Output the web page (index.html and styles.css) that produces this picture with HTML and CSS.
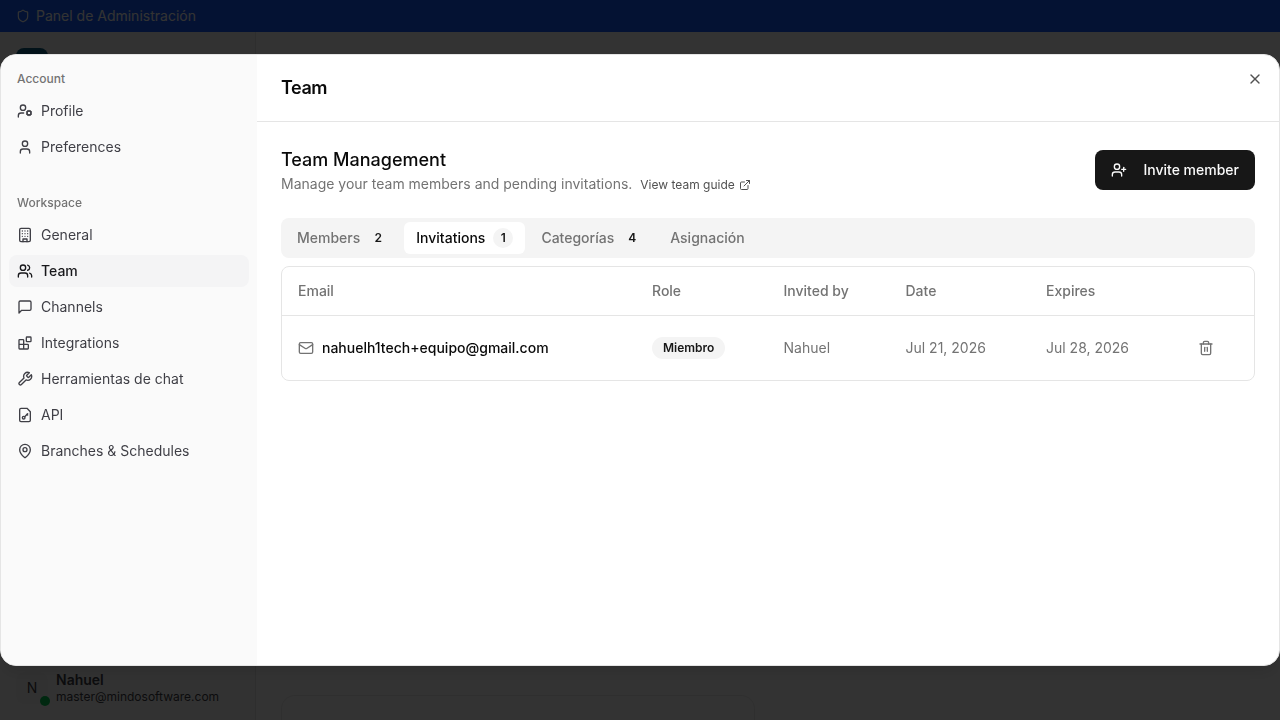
FILE: index.html
```html
<!DOCTYPE html>
<html lang="en">

<head>
    <meta charset="UTF-8">
    <meta name="viewport" content="width=device-width, initial-scale=1.0">
    <title>Team</title>
    <link rel="stylesheet" href="styles.css">
</head>

<body>
    <!-- App behind the dialog -->
    <div class="app">
        <div class="admin-bar">
            <svg class="icon icon-shield" viewBox="0 0 24 24"><path d="M20 13c0 5-3.5 7.5-7.66 8.95a1 1 0 0 1-.67-.01C7.5 20.5 4 18 4 13V6a1 1 0 0 1 1-1c2 0 4.5-1.2 6.24-2.72a1.17 1.17 0 0 1 1.52 0C14.51 3.81 17 5 19 5a1 1 0 0 1 1 1z"/></svg>
            <span>Panel de Administración</span>
        </div>
        <div class="app-body">
            <div class="app-sidebar">
                <div class="app-logo"></div>
                <div class="app-user">
                    <div class="avatar">N<span class="status-dot"></span></div>
                    <div class="user-info">
                        <div class="user-name">Nahuel</div>
                        <div class="user-email">master@mindosoftware.com</div>
                    </div>
                </div>
            </div>
            <div class="app-main">
                <div class="app-card"></div>
            </div>
        </div>
    </div>

    <div class="overlay">
        <div class="dialog">
            <nav class="settings-nav">
                <div class="nav-group">
                    <div class="nav-label">Account</div>
                    <a class="nav-item">
                        <svg class="icon" viewBox="0 0 24 24"><path d="M10 15H6a4 4 0 0 0-4 4v2"/><path d="m14.305 16.53.923-.382"/><path d="m15.228 13.852-.923-.383"/><path d="m16.852 12.228-.383-.923"/><path d="m16.852 17.772-.383.924"/><path d="m19.148 12.228.383-.923"/><path d="m19.53 18.696-.382-.924"/><path d="m20.772 13.852.924-.383"/><path d="m20.772 16.148.924.383"/><circle cx="18" cy="15" r="3"/><circle cx="9" cy="7" r="4"/></svg>
                        Profile
                    </a>
                    <a class="nav-item">
                        <svg class="icon" viewBox="0 0 24 24"><path d="M19 21v-2a4 4 0 0 0-4-4H9a4 4 0 0 0-4 4v2"/><circle cx="12" cy="7" r="4"/></svg>
                        Preferences
                    </a>
                </div>
                <div class="nav-group">
                    <div class="nav-label">Workspace</div>
                    <a class="nav-item">
                        <svg class="icon" viewBox="0 0 24 24"><rect width="16" height="20" x="4" y="2" rx="2"/><path d="M9 22v-4h6v4"/><path d="M8 6h.01M12 6h.01M16 6h.01M8 10h.01M12 10h.01M16 10h.01M8 14h.01M12 14h.01M16 14h.01"/></svg>
                        General
                    </a>
                    <a class="nav-item active">
                        <svg class="icon" viewBox="0 0 24 24"><path d="M16 21v-2a4 4 0 0 0-4-4H6a4 4 0 0 0-4 4v2"/><circle cx="9" cy="7" r="4"/><path d="M22 21v-2a4 4 0 0 0-3-3.87"/><path d="M16 3.13a4 4 0 0 1 0 7.75"/></svg>
                        Team
                    </a>
                    <a class="nav-item">
                        <svg class="icon" viewBox="0 0 24 24"><path d="M21 15a2 2 0 0 1-2 2H7l-4 4V5a2 2 0 0 1 2-2h14a2 2 0 0 1 2 2z"/></svg>
                        Channels
                    </a>
                    <a class="nav-item">
                        <svg class="icon" viewBox="0 0 24 24"><rect width="7" height="7" x="14" y="3" rx="1"/><path d="M10 21V8a1 1 0 0 0-1-1H4a1 1 0 0 0-1 1v12a1 1 0 0 0 1 1h12a1 1 0 0 0 1-1v-5a1 1 0 0 0-1-1H3"/></svg>
                        Integrations
                    </a>
                    <a class="nav-item">
                        <svg class="icon" viewBox="0 0 24 24"><path d="M14.7 6.3a1 1 0 0 0 0 1.4l1.6 1.6a1 1 0 0 0 1.4 0l3.77-3.77a6 6 0 0 1-7.94 7.94l-6.91 6.91a2.12 2.12 0 0 1-3-3l6.91-6.91a6 6 0 0 1 7.94-7.94l-3.76 3.76z"/></svg>
                        Herramientas de chat
                    </a>
                    <a class="nav-item">
                        <svg class="icon" viewBox="0 0 24 24"><path d="M15 2H6a2 2 0 0 0-2 2v16a2 2 0 0 0 2 2h12a2 2 0 0 0 2-2V7Z"/><circle cx="10" cy="16" r="2"/><path d="m16 10-4.5 4.5"/><path d="m15 11 1 1"/></svg>
                        API
                    </a>
                    <a class="nav-item">
                        <svg class="icon" viewBox="0 0 24 24"><path d="M20 10c0 4.993-5.539 10.193-7.399 11.799a1 1 0 0 1-1.202 0C9.539 20.193 4 14.993 4 10a8 8 0 0 1 16 0"/><circle cx="12" cy="10" r="3"/></svg>
                        Branches &amp; Schedules
                    </a>
                </div>
            </nav>

            <div class="panel">
                <header class="panel-header">
                    <h2>Team</h2>
                    <button class="close-btn" aria-label="Close">
                        <svg class="icon" viewBox="0 0 24 24"><path d="M18 6 6 18"/><path d="m6 6 12 12"/></svg>
                    </button>
                </header>

                <div class="panel-content">
                    <div class="section-head">
                        <div>
                            <h3>Team Management</h3>
                            <div class="section-desc">
                                <span>Manage your team members and pending invitations.</span>
                                <a class="guide-link">View team guide
                                    <svg class="icon" viewBox="0 0 24 24"><path d="M15 3h6v6"/><path d="M10 14 21 3"/><path d="M18 13v6a2 2 0 0 1-2 2H5a2 2 0 0 1-2-2V8a2 2 0 0 1 2-2h6"/></svg>
                                </a>
                            </div>
                        </div>
                        <button class="invite-btn">
                            <svg class="icon" viewBox="0 0 24 24"><path d="M16 21v-2a4 4 0 0 0-4-4H6a4 4 0 0 0-4 4v2"/><circle cx="9" cy="7" r="4"/><path d="M19 8v6"/><path d="M22 11h-6"/></svg>
                            Invite member
                        </button>
                    </div>

                    <div class="tabs">
                        <div class="tab">Members <span class="count">2</span></div>
                        <div class="tab active">Invitations <span class="count">1</span></div>
                        <div class="tab">Categorías <span class="count">4</span></div>
                        <div class="tab">Asignación</div>
                    </div>

                    <div class="table-wrap">
                        <table>
                            <thead>
                                <tr>
                                    <th class="col-email">Email</th>
                                    <th class="col-role">Role</th>
                                    <th class="col-by">Invited by</th>
                                    <th class="col-date">Date</th>
                                    <th class="col-expires">Expires</th>
                                    <th></th>
                                </tr>
                            </thead>
                            <tbody>
                                <tr>
                                    <td>
                                        <div class="email-cell">
                                            <svg class="icon" viewBox="0 0 24 24"><rect width="20" height="16" x="2" y="4" rx="2"/><path d="m22 7-8.97 5.7a1.94 1.94 0 0 1-2.06 0L2 7"/></svg>
                                            <span>nahuelh1tech+equipo@gmail.com</span>
                                        </div>
                                    </td>
                                    <td><span class="role-badge">Miembro</span></td>
                                    <td>Nahuel</td>
                                    <td>Jul 21, 2026</td>
                                    <td>Jul 28, 2026</td>
                                    <td class="actions">
                                        <svg class="icon" viewBox="0 0 24 24"><path d="M3 6h18"/><path d="M19 6v14a2 2 0 0 1-2 2H7a2 2 0 0 1-2-2V6"/><path d="M8 6V4a2 2 0 0 1 2-2h4a2 2 0 0 1 2 2v2"/><path d="M10 11v6"/><path d="M14 11v6"/></svg>
                                    </td>
                                </tr>
                            </tbody>
                        </table>
                    </div>
                </div>
            </div>
        </div>
    </div>
</body>

</html>
```
FILE: styles.css
```css
* {
    box-sizing: border-box;
}

body {
    margin: 0;
    height: 100vh;
    overflow: hidden;
    font-family: Inter, sans-serif;
    font-size: 14px;
    line-height: 20px;
    color: #0a0a0a;
    background-color: #fff;
    -webkit-font-smoothing: antialiased;
}

h2,
h3 {
    margin: 0;
    font-size: 18px;
    line-height: 28px;
}

h2 {
    font-weight: 600;
    letter-spacing: -0.025em;
}

h3 {
    font-weight: 500;
}

button {
    font: inherit;
    border: none;
    background: none;
    padding: 0;
    cursor: pointer;
}

.icon {
    width: 16px;
    height: 16px;
    flex-shrink: 0;
    fill: none;
    stroke: currentColor;
    stroke-width: 2;
    stroke-linecap: round;
    stroke-linejoin: round;
}

/* App behind the dialog */
.app {
    height: 100vh;
    display: flex;
    flex-direction: column;
}

.admin-bar {
    height: 32px;
    flex-shrink: 0;
    display: flex;
    align-items: center;
    gap: 6px;
    padding-left: 16px;
    color: #fff;
    background-color: #155dfc;
}

.icon-shield {
    width: 14px;
    height: 14px;
}

.app-body {
    flex: 1;
    display: flex;
    min-height: 0;
}

.app-sidebar {
    width: 256px;
    padding: 16px 16px 15px;
    display: flex;
    flex-direction: column;
    justify-content: space-between;
    color: #3f3f46;
    background-color: #fafafa;
    border-right: 1px solid #e5e5e5;
}

.app-logo {
    width: 32px;
    height: 32px;
    border-radius: 8px;
    background-color: #0b5a7d;
}

.app-user {
    display: flex;
    align-items: center;
    gap: 8px;
}

.avatar {
    position: relative;
    width: 32px;
    height: 32px;
    display: flex;
    align-items: center;
    justify-content: center;
    border-radius: 8px;
    background-color: #f5f5f5;
}

.status-dot {
    position: absolute;
    right: -2px;
    bottom: -2px;
    width: 10px;
    height: 10px;
    border-radius: 50%;
    background-color: #00c950;
}

.user-name {
    font-weight: 600;
    line-height: 18px;
}

.user-email {
    font-size: 12px;
    line-height: 16px;
}

.app-main {
    flex: 1;
    display: flex;
    align-items: flex-end;
    padding-left: 25px;
}

.app-card {
    width: 474px;
    height: 25px;
    border: 1px solid #ececec;
    border-bottom: none;
    border-radius: 14px 14px 0 0;
}

/* Settings dialog */
.overlay {
    position: fixed;
    inset: 0;
    display: flex;
    align-items: center;
    justify-content: center;
    background-color: rgba(0, 0, 0, 0.8);
}

.dialog {
    width: 100%;
    height: 85vh;
    display: flex;
    overflow: hidden;
    background-color: #fff;
    border: 1px solid #e5e5e5;
    border-radius: 16px;
    box-shadow: 0 10px 15px -3px rgba(0, 0, 0, 0.1);
}

.settings-nav {
    width: 256px;
    flex-shrink: 0;
    padding: 8px;
    display: flex;
    flex-direction: column;
    gap: 24px;
    background-color: #fafafa;
}

.nav-group {
    display: flex;
    flex-direction: column;
    gap: 4px;
}

.nav-label {
    height: 32px;
    padding: 0 8px;
    margin-bottom: -4px;
    font-size: 12px;
    line-height: 32px;
    font-weight: 500;
    color: #737373;
}

.nav-item {
    height: 32px;
    display: flex;
    align-items: center;
    gap: 8px;
    padding: 0 8px;
    border-radius: 8px;
    color: #3f3f46;
    cursor: pointer;
}

.nav-item.active {
    color: #18181b;
    font-weight: 500;
    background-color: #f4f4f5;
}

.panel {
    flex: 1;
    min-width: 0;
}

.panel-header {
    height: 67px;
    display: flex;
    justify-content: space-between;
    align-items: center;
    padding: 0 16px 0 24px;
    border-bottom: 1px solid #e5e5e5;
}

.close-btn {
    display: flex;
    align-self: flex-start;
    margin-top: 16px;
    color: #525252;
}

.panel-content {
    padding: 24px;
}

.section-head {
    display: flex;
    justify-content: space-between;
    align-items: center;
    margin-bottom: 24px;
}

.section-desc {
    display: flex;
    align-items: center;
    gap: 8px;
    height: 20px;
    color: #737373;
}

.guide-link {
    display: flex;
    align-items: center;
    gap: 4px;
    padding-top: 2px;
    font-size: 12px;
    color: #525252;
}

.guide-link .icon {
    width: 12px;
    height: 12px;
}

.invite-btn {
    height: 40px;
    display: flex;
    align-items: center;
    gap: 16px;
    padding: 0 16px;
    border-radius: 8px;
    color: #fafafa;
    background-color: #171717;
    font-weight: 500;
}

.tabs {
    height: 40px;
    display: flex;
    gap: 4px;
    padding: 4px;
    margin-bottom: 8px;
    border-radius: 8px;
    background-color: #f4f4f4;
}

.tab {
    display: flex;
    align-items: center;
    gap: 8px;
    padding: 0 12px;
    border-radius: 6px;
    font-weight: 500;
    color: #737373;
    cursor: pointer;
}

.tab.active {
    color: #0a0a0a;
    background-color: #fff;
}

.count {
    width: 20px;
    height: 20px;
    border-radius: 10px;
    text-align: center;
    font-size: 12px;
    font-weight: 600;
    color: #171717;
    background-color: #f4f4f4;
}

.table-wrap {
    border: 1px solid #e5e5e5;
    border-radius: 8px;
}

table {
    width: 100%;
    table-layout: fixed;
    border-collapse: separate;
    border-spacing: 0;
}

th {
    height: 49px;
    padding: 0 16px;
    text-align: left;
    font-weight: 500;
    color: #737373;
    border-bottom: 1px solid #e5e5e5;
}

td {
    height: 64px;
    padding: 0 16px;
    color: #737373;
}

.col-email {
    width: 354px;
}

.col-role {
    width: 131.5px;
}

.col-by {
    width: 122px;
}

.col-date {
    width: 140.5px;
}

.col-expires {
    width: 128px;
}

.email-cell {
    display: flex;
    align-items: center;
    gap: 8px;
}

.email-cell span {
    font-weight: 500;
    color: #0a0a0a;
}

.role-badge {
    display: inline-block;
    padding: 0 10px;
    border: 1px solid transparent;
    border-radius: 11px;
    font-size: 12px;
    line-height: 20px;
    font-weight: 600;
    color: #171717;
    background-color: #f4f4f4;
}

.actions {
    text-align: center;
}

.actions .icon {
    display: block;
    margin: 0 auto;
}
```
